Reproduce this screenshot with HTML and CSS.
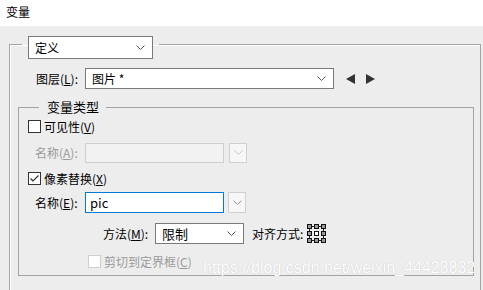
FILE: index.html
```html
<!DOCTYPE html>
<html lang="zh-CN">
<head>
    <meta charset="UTF-8">
    <title>变量</title>
    <link rel="stylesheet" href="styles.css">
</head>
<body>
    <div class="titlebar">变量</div>

    <div class="dialog">
        <fieldset class="group outer">
            <legend class="outer-legend">
                <div class="select preset">
                    <span>定义</span>
                    <svg class="chev" width="9" height="5" viewBox="0 0 9 5"><polyline points="0.5,0.5 4.5,4.5 8.5,0.5"/></svg>
                </div>
            </legend>

            <div class="layer-row">
                <span class="layer-label">图层(<u>L</u>):</span>
                <div class="select layer-select">
                    <span>图片 *</span>
                    <svg class="chev" width="9" height="5" viewBox="0 0 9 5"><polyline points="0.5,0.5 4.5,4.5 8.5,0.5"/></svg>
                </div>
                <div class="nav">
                    <svg width="9" height="10" viewBox="0 0 9 10"><polygon points="9,0 9,10 0,5"/></svg>
                    <svg width="9" height="10" viewBox="0 0 9 10"><polygon points="0,0 0,10 9,5"/></svg>
                </div>
            </div>

            <fieldset class="group inner">
                <legend class="inner-legend">变量类型</legend>

                <div class="row check-row row-visible">
                    <span class="check"></span>
                    <span>可见性(<u>V</u>)</span>
                </div>

                <div class="row field-row row-name-a disabled">
                    <span class="field-label">名称(<u>A</u>):</span>
                    <div class="textbox"></div>
                    <div class="drop-btn">
                        <svg class="chev" width="9" height="5" viewBox="0 0 9 5"><polyline points="0.5,0.5 4.5,4.5 8.5,0.5"/></svg>
                    </div>
                </div>

                <div class="row check-row row-pixel">
                    <span class="check checked">
                        <svg width="11" height="11" viewBox="0 0 11 11"><polyline points="1.5,5.5 4,8 9.5,2.5"/></svg>
                    </span>
                    <span>像素替换(<u>X</u>)</span>
                </div>

                <div class="row field-row row-name-e">
                    <span class="field-label">名称(<u>E</u>):</span>
                    <div class="textbox active">pic</div>
                    <div class="drop-btn">
                        <svg class="chev" width="9" height="5" viewBox="0 0 9 5"><polyline points="0.5,0.5 4.5,4.5 8.5,0.5"/></svg>
                    </div>
                </div>

                <div class="row method-row">
                    <span class="method-label">方法(<u>M</u>):</span>
                    <div class="select method-select">
                        <span>限制</span>
                        <svg class="chev" width="9" height="5" viewBox="0 0 9 5"><polyline points="0.5,0.5 4.5,4.5 8.5,0.5"/></svg>
                    </div>
                    <span class="align-label">对齐方式:</span>
                    <svg class="align-icon" width="19" height="19" viewBox="0 0 19 19">
                        <g class="links">
                            <line x1="5" y1="2.5" x2="7" y2="2.5"/>
                            <line x1="12" y1="2.5" x2="14" y2="2.5"/>
                            <line x1="5" y1="16.5" x2="7" y2="16.5"/>
                            <line x1="12" y1="16.5" x2="14" y2="16.5"/>
                            <line x1="2.5" y1="5" x2="2.5" y2="7"/>
                            <line x1="2.5" y1="12" x2="2.5" y2="14"/>
                            <line x1="16.5" y1="5" x2="16.5" y2="7"/>
                            <line x1="16.5" y1="12" x2="16.5" y2="14"/>
                        </g>
                        <g class="dots">
                            <rect x="0.5" y="0.5" width="4" height="4"/>
                            <rect x="7.5" y="0.5" width="4" height="4"/>
                            <rect x="14.5" y="0.5" width="4" height="4"/>
                            <rect x="0.5" y="7.5" width="4" height="4"/>
                            <rect class="on" x="7.5" y="7.5" width="4" height="4"/>
                            <rect x="14.5" y="7.5" width="4" height="4"/>
                            <rect x="0.5" y="14.5" width="4" height="4"/>
                            <rect x="7.5" y="14.5" width="4" height="4"/>
                            <rect x="14.5" y="14.5" width="4" height="4"/>
                        </g>
                    </svg>
                </div>

                <div class="row check-row row-clip disabled">
                    <span class="check"></span>
                    <span>剪切到定界框(<u>C</u>)</span>
                </div>
            </fieldset>
        </fieldset>
    </div>

    <div class="watermark">https://blog.csdn.net/weixin_44423832</div>
</body>
</html>
```

FILE: styles.css
```css
body {
    margin: 0;
    width: 483px;
    height: 290px;
    overflow: hidden;
    position: relative;
    background: #ededed;
    font-family: 'Noto Sans CJK SC', sans-serif;
    font-size: 12px;
    line-height: 16px;
    color: #000;
}

u {
    text-decoration: underline;
    text-underline-offset: 1px;
}

.titlebar {
    height: 26px;
    background: #fff;
    padding-left: 6px;
    line-height: 24px;
    box-sizing: border-box;
}

.dialog {
    padding: 3px 2px 0 9px;
}

/* Cadres de groupe */
.group {
    margin: 0;
    min-width: 0;
    border: 1px solid #a3a3a3;
}

.outer {
    padding: 9px 6px 14px 8px;
    box-shadow: inset 1px 1px 0 #fff;
}

.outer-legend {
    margin-left: 4px;
    padding: 7px 6px 0;
}

.inner {
    margin-top: 10px;
    padding: 0 0 3px 0;
}

.inner-legend {
    margin-left: 20px;
    padding: 0 7px 0 8px;
    font-size: 13px;
    line-height: 16px;
}

/* Listes déroulantes */
.select {
    display: flex;
    align-items: center;
    justify-content: space-between;
    box-sizing: border-box;
    background: #fff;
    border: 1px solid #7a7a7a;
    padding: 0 7px 0 6px;
}

.chev polyline {
    fill: none;
    stroke: #555;
    stroke-width: 1;
}

.preset {
    width: 125px;
    height: 23px;
}

.layer-row {
    display: flex;
    align-items: center;
    height: 21px;
    padding-left: 18px;
}

.layer-label {
    width: 49px;
}

.layer-select {
    width: 249px;
    height: 21px;
}

.nav {
    display: flex;
    gap: 11px;
    margin-left: 12px;
}

.nav polygon {
    fill: #333;
}

/* Lignes du groupe interne */
.row {
    display: flex;
    align-items: center;
    height: 21px;
}

.check-row {
    gap: 3px;
    padding-left: 9px;
}

.check {
    width: 13px;
    height: 13px;
    box-sizing: border-box;
    border: 1px solid #333;
    background: #fff;
    display: flex;
    align-items: center;
    justify-content: center;
}

.check polyline {
    fill: none;
    stroke: #333;
    stroke-width: 1.2;
}

.row-visible {
    margin-top: 1px;
}

.row-name-a {
    margin-top: 5px;
}

.row-pixel {
    margin-top: 5px;
}

.row-name-e {
    margin-top: 3px;
}

.method-row {
    margin-top: 10px;
    padding-left: 84px;
}

.method-label {
    width: 52px;
}

.row-clip {
    margin-top: 7px;
    padding-left: 69px;
}

.field-row {
    padding-left: 16px;
}

.field-label {
    width: 50px;
}

.textbox {
    width: 139px;
    height: 21px;
    box-sizing: border-box;
    border: 1px solid #7a7a7a;
    background: #fff;
    padding-left: 4px;
    line-height: 19px;
    font-size: 13px;
}

.textbox.active {
    border-color: #0078d7;
}

.drop-btn {
    width: 18px;
    height: 21px;
    margin-left: 4px;
    box-sizing: border-box;
    border: 1px solid #d0d0d0;
    background: #f7f7f7;
    display: flex;
    align-items: center;
    justify-content: center;
}

.drop-btn .chev polyline {
    stroke: #9a9a9a;
}

.disabled {
    color: #9a9a9a;
}

.disabled .textbox {
    height: 20px;
    background: #f2f2f2;
    border-color: #cfcfcf;
}

.disabled .drop-btn {
    height: 20px;
    margin-left: 5px;
}

.disabled .drop-btn .chev polyline {
    stroke: #c4c4c4;
}

.disabled .check {
    border-color: #cfcfcf;
}

.method-select {
    width: 89px;
    height: 21px;
    font-size: 13px;
}

.align-label {
    margin-left: 8px;
}

.align-icon {
    margin-left: 4px;
}

.align-icon .links line {
    stroke: #222;
    stroke-width: 1;
}

.align-icon .dots rect {
    fill: #9a9a9a;
    stroke: #111;
    stroke-width: 1;
}

.align-icon .dots rect.on {
    fill: #fff;
}

/* Filigrane */
.watermark {
    position: absolute;
    left: 203px;
    top: 259px;
    font-family: 'Liberation Sans', sans-serif;
    font-size: 16px;
    line-height: 18px;
    color: #fff;
    text-shadow: 0 0 1px rgba(0, 0, 0, 0.22);
}
```
